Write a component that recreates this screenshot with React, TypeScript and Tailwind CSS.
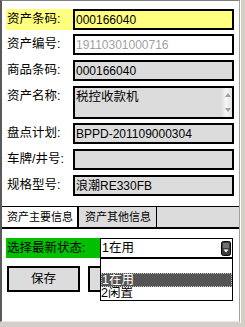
import React from "react";

const F = "font-['Liberation_Sans','Noto_Sans_CJK_SC',sans-serif]";

function Row({ label, children, h = "h-[21px]", mt, labelBg = "" }: { label: string; children: React.ReactNode; h?: string; mt: string; labelBg?: string }) {
  return (
    <div className={`flex ${mt} ${h} pl-[4px]`}>
      <div className={`w-[67px] h-[21px] flex items-center pl-[1px] text-[12.5px] text-black ${labelBg}`}>{label}</div>
      {children}
    </div>
  );
}

export default function App() {
  return (
    <div className={`w-[245px] h-[327px] bg-[#d4d0c8] relative overflow-hidden ${F}`}>
      <div className="w-[241px] h-[323px] border-r border-r-white">
        <div className="w-[240px] h-[322px] bg-white border-l-2 border-l-[#5a5a5a] border-t border-t-[#808080] border-r border-r-[#a0a0a0] border-b border-b-[#e8e8e8] relative">
          <Row label="资产条码:" mt="mt-[8px]" labelBg="bg-[#ffff80]">
            <div className="w-[161px] h-[21px] border-2 border-black bg-[#ffff80] flex items-center pl-[1px] text-[12px] text-black">000166040</div>
          </Row>
          <Row label="资产编号:" mt="mt-[4px]">
            <div className="w-[161px] h-[21px] border-2 border-black bg-white flex items-center pl-[1px] text-[12px] text-[#a0a0a0]">19110301000716</div>
          </Row>
          <Row label="商品条码:" mt="mt-[5px]">
            <div className="w-[161px] h-[21px] border-2 border-black bg-[#dcdcdc] flex items-center pl-[1px] text-[12px] text-black">000166040</div>
          </Row>
          <Row label="资产名称:" mt="mt-[5px]" h="h-[33px]">
            <div className="w-[161px] h-[33px] border-2 border-black bg-[#dcdcdc] flex text-[12.5px] text-black">
              <div className="flex-1 pl-[1px] pt-[2px] leading-[14px]">税控收款机</div>
              <div className="w-[12px] h-full bg-gradient-to-r from-[#d8d8d8] via-[#f6f6f6] to-[#e4e4e4] flex flex-col items-end justify-between pr-[1px] py-[5px]">
                <svg width="6" height="4" viewBox="0 0 6 4"><path d="M3 0 L6 4 L0 4 Z" fill="#a0a0a0" /></svg>
                <svg width="6" height="4" viewBox="0 0 6 4"><path d="M0 0 L6 0 L3 4 Z" fill="#a0a0a0" /></svg>
              </div>
            </div>
          </Row>
          <Row label="盘点计划:" mt="mt-[4px]">
            <div className="w-[161px] h-[21px] border-2 border-black bg-[#dcdcdc] flex items-center pl-[1px] text-[12px] text-black">BPPD-201109000304</div>
          </Row>
          <Row label="车牌/井号:" mt="mt-[5px]">
            <div className="w-[161px] h-[21px] border-2 border-black bg-[#dcdcdc]"></div>
          </Row>
          <Row label="规格型号:" mt="mt-[5px]">
            <div className="w-[161px] h-[21px] border-2 border-black bg-[#dcdcdc] flex items-center pl-[1px] text-[12px] text-black">浪潮RE330FB</div>
          </Row>

          <div className="mt-[10px] h-[23px] flex border-b-2 border-b-black text-[11px] text-black">
            <div className="w-[77px] h-full bg-white border-t border-t-black border-r-2 border-r-black flex items-center pl-[5px]">资产主要信息</div>
            <div className="w-[78px] h-full bg-[#dcdcdc] border-t border-t-black border-r border-r-black flex items-center pl-[6px]">资产其他信息</div>
            <div className="flex-1 h-full bg-[#dcdcdc] border-t border-t-black"></div>
          </div>

          <div className="flex mt-[9px] pl-[4px] h-[20px]">
            <div className="w-[94px] h-[20px] bg-[#00c000] flex items-center pl-[1px] text-[12.5px] text-black">选择最新状态:</div>
            <div className="w-[133px] h-[20px] border border-black bg-white flex items-center justify-between pl-[1px] pr-[1px] text-[12.5px] text-black">
              <span>1在用</span>
              <svg width="10" height="15" viewBox="0 0 10 15">
                <rect x="0.5" y="0.5" width="9" height="14" rx="2" fill="#3a3a3a" stroke="#000" />
                <rect x="2" y="2" width="6" height="5" fill="#707070" />
                <path d="M2.5 8.5 L7.5 8.5 L5 11.5 Z" fill="#fff" />
              </svg>
            </div>
          </div>

          <div className="flex mt-[8px] pl-[5px] gap-[8px]">
            <div className="w-[73px] h-[26px] border-2 border-black bg-[#dcdcdc] flex items-center justify-center text-[12.5px] text-black">保存</div>
            <div className="w-[73px] h-[26px] border-2 border-black bg-[#dcdcdc] flex items-center justify-center text-[12.5px] text-black">返回</div>
          </div>

          <div className="absolute left-[98px] top-[257px] w-[133px] h-[43px] border border-black bg-white text-[12.5px]">
            <div className="h-[14px]"></div>
            <div className="h-[14px] bg-[#555555] text-white border border-dotted border-[#c0c0c0] flex items-center leading-[12px] overflow-hidden">1在用</div>
            <div className="h-[13px] text-black flex items-center leading-[13px] overflow-hidden">2闲置</div>
          </div>
        </div>
      </div>
    </div>
  );
}
